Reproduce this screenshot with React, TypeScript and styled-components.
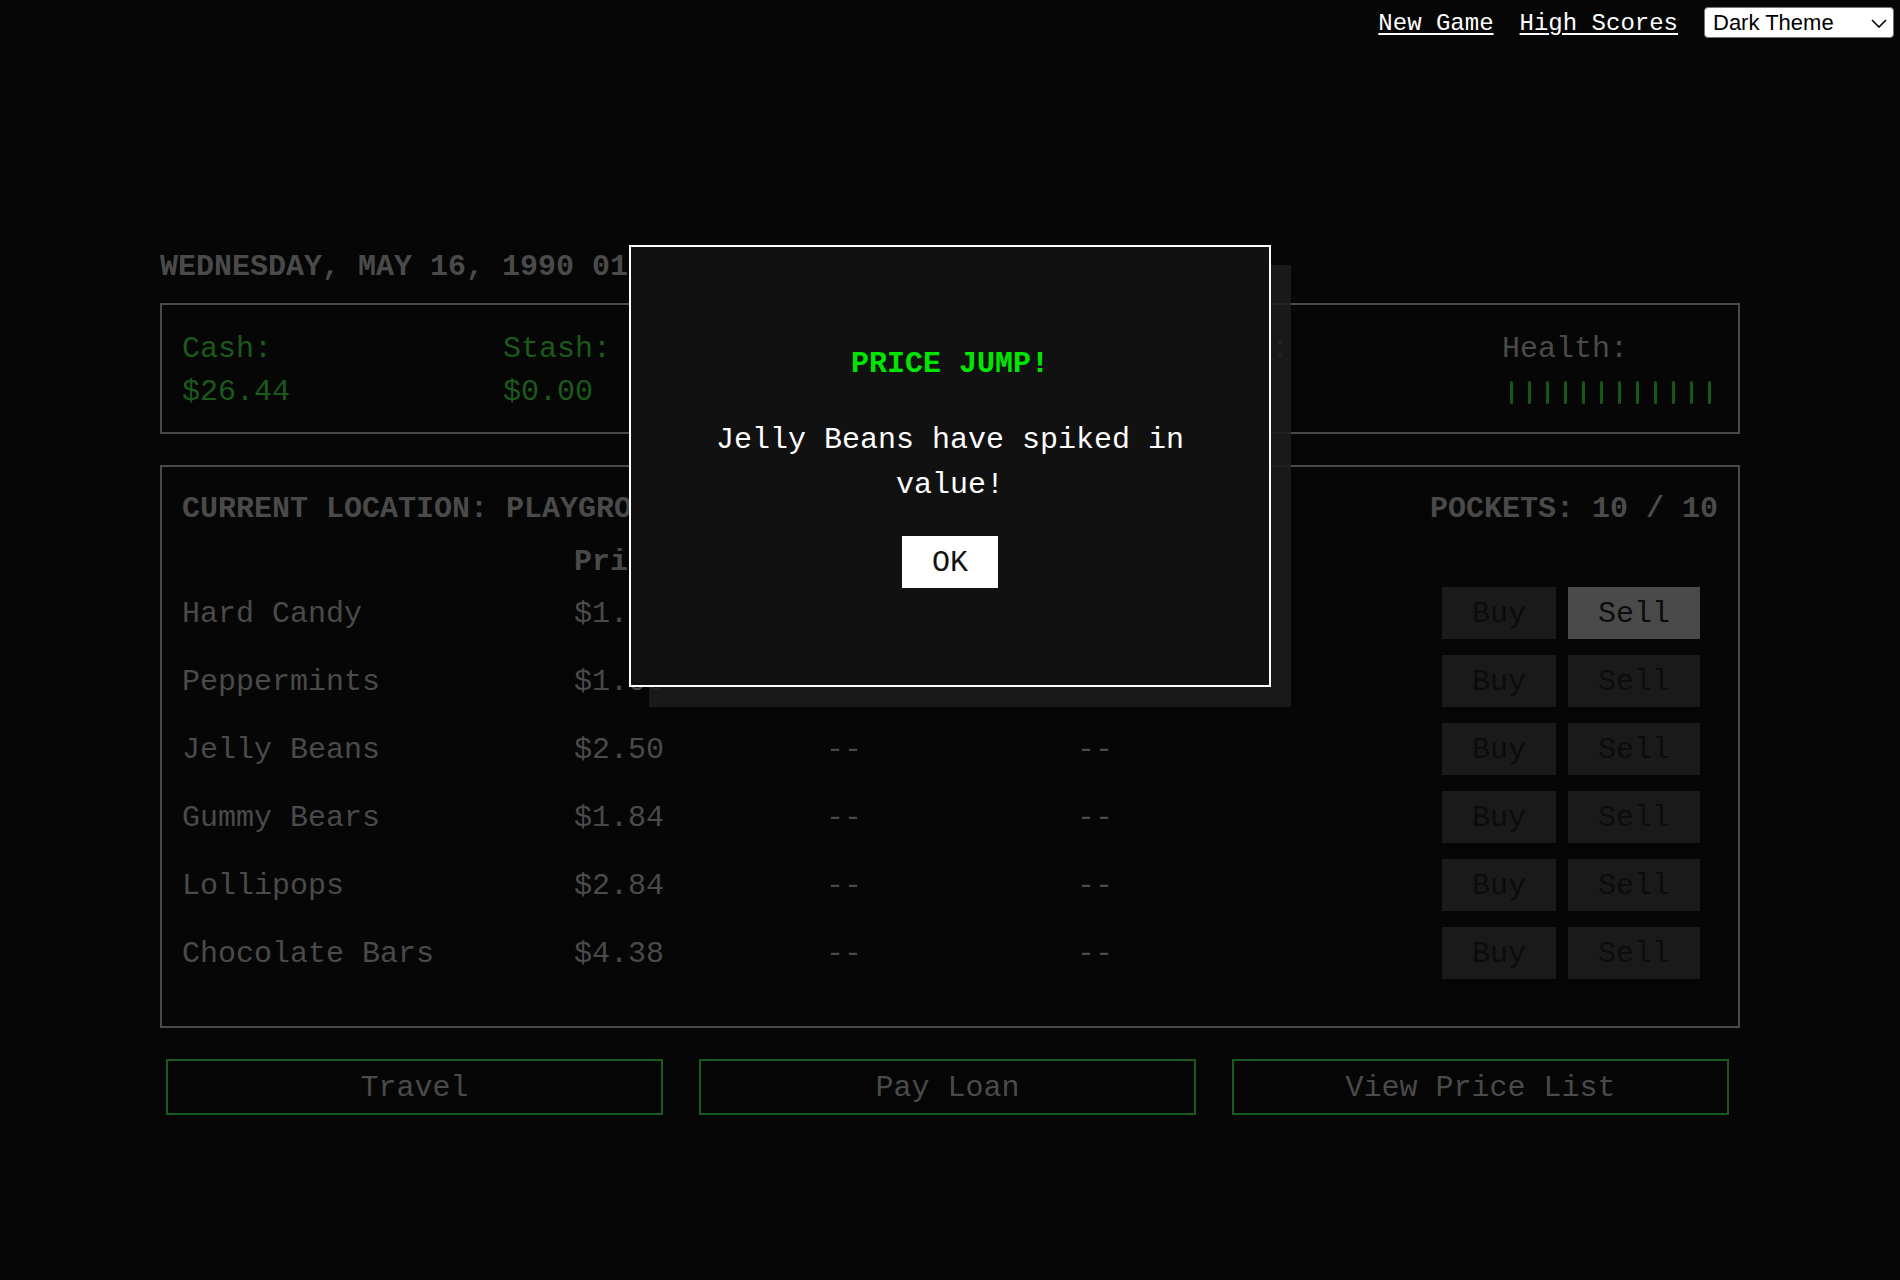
import React from "react";
import styled, { createGlobalStyle } from "styled-components";

const MONO = `"Courier New", "Liberation Mono", monospace`;

const GlobalStyle = createGlobalStyle`
  html, body {
    margin: 0;
    padding: 0;
    background: #060606;
  }
  body {
    font-family: ${MONO};
    color: #4a4a4a;
    overflow: hidden;
  }
  *, *::before, *::after {
    box-sizing: border-box;
  }
`;

const Page = styled.div`
  position: relative;
  min-height: 1280px;
  background: #060606;
`;

const TopBar = styled.nav`
  display: flex;
  justify-content: flex-end;
  align-items: center;
  gap: 26px;
  height: 38px;
  padding: 7px 6px 0 0;
`;

const NavLink = styled.a`
  font-family: ${MONO};
  font-size: 24px;
  line-height: 31px;
  padding-top: 2px;
  color: #ffffff;
  text-decoration: underline;
  text-underline-offset: 3px;
  cursor: pointer;
`;

const SelectWrap = styled.div`
  position: relative;
  width: 190px;
  height: 31px;
`;

const ThemeSelect = styled.select`
  appearance: none;
  -webkit-appearance: none;
  width: 100%;
  height: 100%;
  padding: 0 30px 0 8px;
  font-family: "Liberation Sans", Arial, sans-serif;
  font-size: 22px;
  color: #000;
  background: #fff;
  border: 1px solid #767676;
  border-radius: 4px;
`;

const Chevron = styled.svg`
  position: absolute;
  right: 7px;
  top: 12px;
  width: 16px;
  height: 9px;
  pointer-events: none;
`;

const Main = styled.main`
  width: 1580px;
  margin: 205px auto 0;
`;

const DateHeading = styled.h2`
  margin: 0 0 15px;
  padding-top: 3px;
  font-size: 30px;
  line-height: 42px;
  font-weight: 700;
  color: #4a4a4a;
  white-space: nowrap;
`;

const StatsPanel = styled.section`
  display: flex;
  justify-content: space-between;
  border: 2px solid #4a4a4a;
  padding: 23px 20px 18px;
`;

const Stat = styled.div`
  display: flex;
  flex-direction: column;
`;

const StatText = styled.span<{ $tone: "green" | "gray" }>`
  font-size: 30px;
  line-height: 43px;
  white-space: pre;
  color: ${(p) => (p.$tone === "green" ? "#1a5a1a" : "#4a4a4a")};
`;

const HealthMeter = styled.div`
  display: flex;
  align-items: center;
  height: 43px;
`;

const HealthTick = styled.span`
  display: flex;
  justify-content: center;
  width: 18px;
  &::before {
    content: "";
    width: 3px;
    height: 23px;
    border-radius: 2px;
    background: #145a14;
  }
`;

const LocationPanel = styled.section`
  margin-top: 31px;
  border: 2px solid #4a4a4a;
  padding: 21px 20px 38px;
`;

const PanelHeader = styled.div`
  display: flex;
  justify-content: space-between;
  font-size: 30px;
  line-height: 42px;
  font-weight: 700;
  color: #4a4a4a;
  white-space: pre;
`;

const MarketTable = styled.div`
  margin-top: 10px;
`;

const MarketRow = styled.div<{ $header?: boolean }>`
  display: grid;
  grid-template-columns: 392px 252px 251px 1fr auto;
  align-items: center;
  height: ${(p) => (p.$header ? "40px" : "68px")};
  padding-top: ${(p) => (p.$header ? "3px" : "0")};
  font-size: 30px;
  font-weight: ${(p) => (p.$header ? 700 : 400)};
  color: #4a4a4a;
  white-space: pre;
`;

const Actions = styled.div`
  display: flex;
  gap: 12px;
  padding-right: 18px;
  margin-top: -2px;
`;

const TradeButton = styled.button<{ $active?: boolean }>`
  height: 52px;
  padding: 2px 30px 0;
  border: none;
  font-family: ${MONO};
  font-size: 30px;
  color: #0c0c0c;
  background: ${(p) => (p.$active ? "#4a4a4a" : "#1a1a1a")};
  cursor: pointer;
`;

const ActionBar = styled.div`
  display: grid;
  grid-template-columns: repeat(3, 497px);
  gap: 36px;
  margin: 31px 0 0 6px;
`;

const ActionButton = styled.button`
  height: 56px;
  padding-top: 2px;
  border: 2px solid #1a5a1a;
  background: transparent;
  color: #4a4a4a;
  font-family: ${MONO};
  font-size: 30px;
  cursor: pointer;
`;

const Dialog = styled.div`
  position: absolute;
  top: 245px;
  left: 50%;
  transform: translateX(-50%);
  width: 642px;
  height: 442px;
  display: flex;
  flex-direction: column;
  align-items: center;
  padding: 97px 60px 0;
  text-align: center;
  background: #111111;
  border: 2px solid #ffffff;
  box-shadow: 20px 20px 0 rgba(28, 28, 28, 0.88);
`;

const DialogTitle = styled.h3`
  margin: 0 0 34px;
  font-size: 30px;
  line-height: 40px;
  font-weight: 700;
  color: #00e600;
`;

const DialogText = styled.p`
  margin: 0 0 28px;
  font-size: 30px;
  line-height: 45px;
  color: #ffffff;
`;

const OkButton = styled.button`
  height: 52px;
  padding: 2px 30px 0;
  border: none;
  background: #ffffff;
  color: #111111;
  font-family: ${MONO};
  font-size: 30px;
  cursor: pointer;
`;

type Item = { name: string; price: string; active?: boolean };

const items: Item[] = [
  { name: "Hard Candy", price: "$1.18", active: true },
  { name: "Peppermints", price: "$1.06" },
  { name: "Jelly Beans", price: "$2.50" },
  { name: "Gummy Bears", price: "$1.84" },
  { name: "Lollipops", price: "$2.84" },
  { name: "Chocolate Bars", price: "$4.38" },
];

export default function App() {
  return (
    <Page>
      <GlobalStyle />
      <TopBar>
        <NavLink>New Game</NavLink>
        <NavLink>High Scores</NavLink>
        <SelectWrap>
          <ThemeSelect defaultValue="dark">
            <option value="dark">Dark Theme</option>
            <option value="light">Light Theme</option>
          </ThemeSelect>
          <Chevron viewBox="0 0 16 9" aria-hidden="true">
            <path d="M1 1 L8 8 L15 1" fill="none" stroke="#000" strokeWidth="1.6" />
          </Chevron>
        </SelectWrap>
      </TopBar>

      <Main>
        <DateHeading>WEDNESDAY, MAY 16, 1990 01:00 PM</DateHeading>

        <StatsPanel>
          <Stat>
            <StatText $tone="green">Cash:</StatText>
            <StatText $tone="green">$26.44</StatText>
          </Stat>
          <Stat>
            <StatText $tone="green">Stash:</StatText>
            <StatText $tone="green">$0.00</StatText>
          </Stat>
          <Stat>
            <StatText $tone="gray">Debt:</StatText>
            <StatText $tone="gray">$100.00</StatText>
          </Stat>
          <Stat>
            <StatText $tone="gray">Weapon:</StatText>
            <StatText $tone="gray">None</StatText>
          </Stat>
          <Stat>
            <StatText $tone="gray">Health:</StatText>
            <HealthMeter aria-label="Health 12 of 12">
              {Array.from({ length: 12 }).map((_, i) => (
                <HealthTick key={i} />
              ))}
            </HealthMeter>
          </Stat>
        </StatsPanel>

        <LocationPanel>
          <PanelHeader>
            <span>CURRENT LOCATION: PLAYGROUND</span>
            <span>POCKETS: 10 / 10</span>
          </PanelHeader>
          <MarketTable>
            <MarketRow $header>
              <span />
              <span>Price</span>
              <span>Owned</span>
              <span>Paid</span>
              <span />
            </MarketRow>
            {items.map((it) => (
              <MarketRow key={it.name}>
                <span>{it.name}</span>
                <span>{it.price}</span>
                <span>--</span>
                <span>--</span>
                <Actions>
                  <TradeButton>Buy</TradeButton>
                  <TradeButton $active={it.active}>Sell</TradeButton>
                </Actions>
              </MarketRow>
            ))}
          </MarketTable>
        </LocationPanel>

        <ActionBar>
          <ActionButton>Travel</ActionButton>
          <ActionButton>Pay Loan</ActionButton>
          <ActionButton>View Price List</ActionButton>
        </ActionBar>
      </Main>

      <Dialog role="dialog">
        <DialogTitle>PRICE JUMP!</DialogTitle>
        <DialogText>Jelly Beans have spiked in value!</DialogText>
        <OkButton>OK</OkButton>
      </Dialog>
    </Page>
  );
}
